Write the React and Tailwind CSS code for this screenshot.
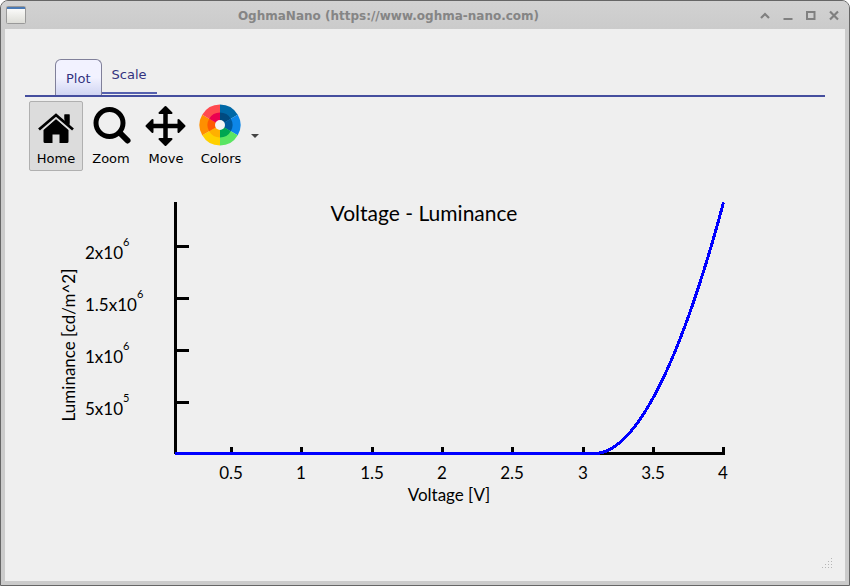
import { useState } from "react";

const TABS = ["Plot", "Scale"];

const X_TICKS = [
    { x: 206, label: "0.5" },
    { x: 276, label: "1" },
    { x: 347, label: "1.5" },
    { x: 417, label: "2" },
    { x: 487, label: "2.5" },
    { x: 558, label: "3" },
    { x: 628, label: "3.5" },
    { x: 698, label: "4" },
];

const Y_TICKS = [
    { y: 71, base: "2x10", exp: "6", expX: 98 },
    { y: 123, base: "1.5x10", exp: "6", expX: 112 },
    { y: 175, base: "1x10", exp: "6", expX: 98 },
    { y: 227, base: "5x10", exp: "5", expX: 98 },
];

// flat until turn-on, then luminance grows as a power of the overdrive
const CURVE =
    "M150 278.5 H570 " +
    Array.from({ length: 33 }, (_, i) => {
        const t = i / 32;
        return `L${570 + 128.5 * t} ${278.5 - 251 * Math.pow(t, 1.9)}`;
    }).join(" ");

// outer and inner colours, clockwise from the top
const WHEEL = [
    ["#0068a6", "#004a80"],
    ["#0d86e8", "#005a9e"],
    ["#5ae562", "#00a651"],
    ["#ffd000", "#ffb000"],
    ["#ff8f00", "#ff5a00"],
    ["#ff4a50", "#ea0050"],
];

const sector = (index, radius) => {
    const point = (deg) => {
        const a = (deg * Math.PI) / 180;
        return `${23 + radius * Math.sin(a)} ${23 - radius * Math.cos(a)}`;
    };
    return `M23 23 L${point(index * 60)} A${radius} ${radius} 0 0 1 ${point(index * 60 + 60)} Z`;
};

const HomeIcon = () => (
    <svg viewBox="0 0 48 48" className="size-12">
        <path d="M24 17 L36.5 28 V39.5 a1.5 1.5 0 0 1 -1.5 1.5 H27.5 V32.5 H20.5 V41 H13 A1.5 1.5 0 0 1 11.5 39.5 V28 Z" />
        <path d="M32.5 12.5 h5 v11.500 l-5 -4.500 Z" />
        <path
            d="M7.500 27.500 L24 13.500 L40.500 27.500"
            fill="none"
            stroke="#dcdcdc"
            strokeWidth="5"
        />
        <path d="M32.5 12.5 h5 v11.500 l-5 -4.500 Z" />
        <path d="M7 27.500 L24 13 L41 27.500" fill="none" stroke="#000" strokeWidth="2.800" />
    </svg>
);

const ZoomIcon = () => (
    <svg viewBox="0 0 48 48" className="size-12" fill="none" stroke="#000">
        <circle cx="22.500" cy="21" r="13.500" strokeWidth="5" />
        <path d="M33 31 L40.500 38.500" strokeWidth="6" strokeLinecap="round" />
    </svg>
);

const MoveIcon = () => (
    <svg viewBox="0 0 48 48" className="size-12">
        <path d="M23.500 7 V41 M7 24 H41" stroke="#000" strokeWidth="4.500" />
        <path
            d="M23.500 5 L29.500 11 H17.500 Z M23.500 43 L29.500 37 H17.500 Z M4.500 24 L10.500 18 V30 Z M42.500 24 L36.500 18 V30 Z"
            stroke="#000"
            strokeWidth="2"
            strokeLinejoin="round"
        />
    </svg>
);

const ColorsIcon = () => (
    <svg viewBox="0 0 48 48" className="size-12">
        {WHEEL.map(([outer], i) => (
            <path key={outer} d={sector(i, 20.5)} fill={outer} />
        ))}
        {WHEEL.map(([, inner], i) => (
            <path key={inner} d={sector(i, 12.5)} fill={inner} />
        ))}
        <circle cx="23" cy="23" r="5" fill="#f4f4f4" />
    </svg>
);

const TOOLS = [
    { name: "Home", Icon: HomeIcon },
    { name: "Zoom", Icon: ZoomIcon },
    { name: "Move", Icon: MoveIcon },
    { name: "Colors", Icon: ColorsIcon },
];

const TitleBar = () => (
    <header className="flex h-7 items-center bg-linear-to-b from-[#d2d2d2] to-[#cbcbcb]">
        <svg viewBox="0 0 22 20" className="ml-1 h-5 w-[22px]">
            <defs>
                <linearGradient id="sheet" x1="0" y1="0" x2="0" y2="1">
                    <stop offset="0" stopColor="#fff" />
                    <stop offset="1" stopColor="#dcdcd6" />
                </linearGradient>
            </defs>
            <rect x="1.500" y="1.500" width="19" height="17" rx="1" fill="url(#sheet)" stroke="#999" />
            <path d="M2 3 H20" stroke="#4a7ab5" strokeWidth="2" />
        </svg>
        <h1 className="flex-1 pt-0.5 pr-2 text-center text-xs font-bold text-[#858585]">
            OghmaNano (https://www.oghma-nano.com)
        </h1>
        <div className="flex gap-[9px] pr-2">
            <button aria-label="Shade" className="size-3.5">
                <svg viewBox="0 0 14 14" fill="none" stroke="#808080" strokeWidth="2.200">
                    <path d="M3 10 L7 6 L11 10" />
                </svg>
            </button>
            <button aria-label="Minimize" className="size-3.5">
                <svg viewBox="0 0 14 14" fill="none" stroke="#808080" strokeWidth="2">
                    <path d="M2.500 11 H11.500" />
                </svg>
            </button>
            <button aria-label="Maximize" className="size-3.5">
                <svg viewBox="0 0 14 14" fill="none" stroke="#808080" strokeWidth="2">
                    <path d="M3 4 H10.500 V11 H3 Z" />
                </svg>
            </button>
            <button aria-label="Close" className="size-3.5">
                <svg viewBox="0 0 14 14" fill="none" stroke="#808080" strokeWidth="2.200">
                    <path d="M3 3.500 L11 11.500 M11 3.500 L3 11.500" />
                </svg>
            </button>
        </div>
    </header>
);

const Chart = () => (
    <svg
        viewBox="0 0 800 340"
        role="img"
        aria-label="Voltage - Luminance"
        className="mt-1 w-full font-[Lato,sans-serif]"
        fontSize="17"
    >
        <g stroke="#000" strokeWidth="3" shapeRendering="crispEdges">
            <path d="M150.500 27 V279 M150 278.500 H700" />
            {X_TICKS.map(({ x }) => (
                <path key={x} d={`M${x + 0.5} 272 V279`} />
            ))}
            {Y_TICKS.map(({ y }) => (
                <path key={y} d={`M150 ${y + 0.5} H164`} />
            ))}
        </g>
        <path d={CURVE} fill="none" stroke="#00f" strokeWidth="3" shapeRendering="crispEdges" />
        <text x="399" y="46" fontSize="21" textAnchor="middle">Voltage - Luminance</text>
        {X_TICKS.map(({ x, label }) => (
            <text key={label} x={x} y="304" textAnchor="middle">{label}</text>
        ))}
        {Y_TICKS.map(({ y, base, exp, expX }) => (
            <g key={base}>
                <text x="60" y={y + 13}>{base}</text>
                <text x={expX} y={y} fontSize="11">{exp}</text>
            </g>
        ))}
        <text x="424" y="326" textAnchor="middle">Voltage [V]</text>
        <text transform="translate(50 170) rotate(-90)" textAnchor="middle">Luminance [cd/m^2]</text>
    </svg>
);

export default function App() {
    const [tab, setTab] = useState("Plot");
    const [tool, setTool] = useState("Home");

    return (
        <div className="bg-white font-['DejaVu_Sans',sans-serif]">
            <div className="flex min-h-screen flex-col rounded-t-lg border border-[#666] bg-[#cbcbcb] overflow-hidden">
                <TitleBar />
                <main className="mx-1 mb-1 flex flex-1 flex-col bg-[#efefef] px-5 pt-[30px]">
                    <div role="tablist" className="flex border-b-2 border-[#454e9e] pl-[30px] text-[13px] text-[#333380]">
                        {TABS.map((name) => (
                            <button
                                key={name}
                                role="tab"
                                aria-selected={tab === name}
                                onClick={() => setTab(name)}
                                className={
                                    tab === name
                                        ? "h-9 rounded-t-md border border-b-0 border-[#80809a] bg-linear-to-b from-[#f2f2ff] from-50% to-[#d0d5f2] px-2.5 pt-0.5"
                                        : "h-[35px] border-b-2 border-[#5560ae] px-2.5 pb-0.5"
                                }
                            >
                                {name}
                            </button>
                        ))}
                    </div>
                    <div role="toolbar" className="mt-1 flex items-center gap-px pl-1 text-[13px] text-black">
                        {TOOLS.map(({ name, Icon }) => (
                            <button
                                key={name}
                                onClick={() => setTool(name)}
                                className={
                                    "flex h-[70px] w-[54px] flex-col items-center rounded-xs border leading-[18px] " +
                                    (tool === name ? "border-[#b0b0b0] bg-[#dcdcdc]" : "border-transparent")
                                }
                            >
                                <Icon />
                                {name}
                            </button>
                        ))}
                        <button aria-label="More colors" className="px-0.5">
                            <svg viewBox="0 0 8 4" className="h-1 w-2">
                                <path d="M0 0 H8 L4 4 Z" fill="#444" />
                            </svg>
                        </button>
                    </div>
                    <Chart />
                    <svg viewBox="0 0 12 12" className="mt-auto mb-3 -mr-2 size-3 self-end" fill="#b5b5b5">
                        {[0, 1, 2, 3].map((row) =>
                            [...Array(row + 1).keys()].map((i) => (
                                <rect key={`${row}-${i}`} x={10 - i * 3} y={1 + row * 3} width="1" height="1" />
                            ))
                        )}
                    </svg>
                </main>
            </div>
        </div>
    );
}
